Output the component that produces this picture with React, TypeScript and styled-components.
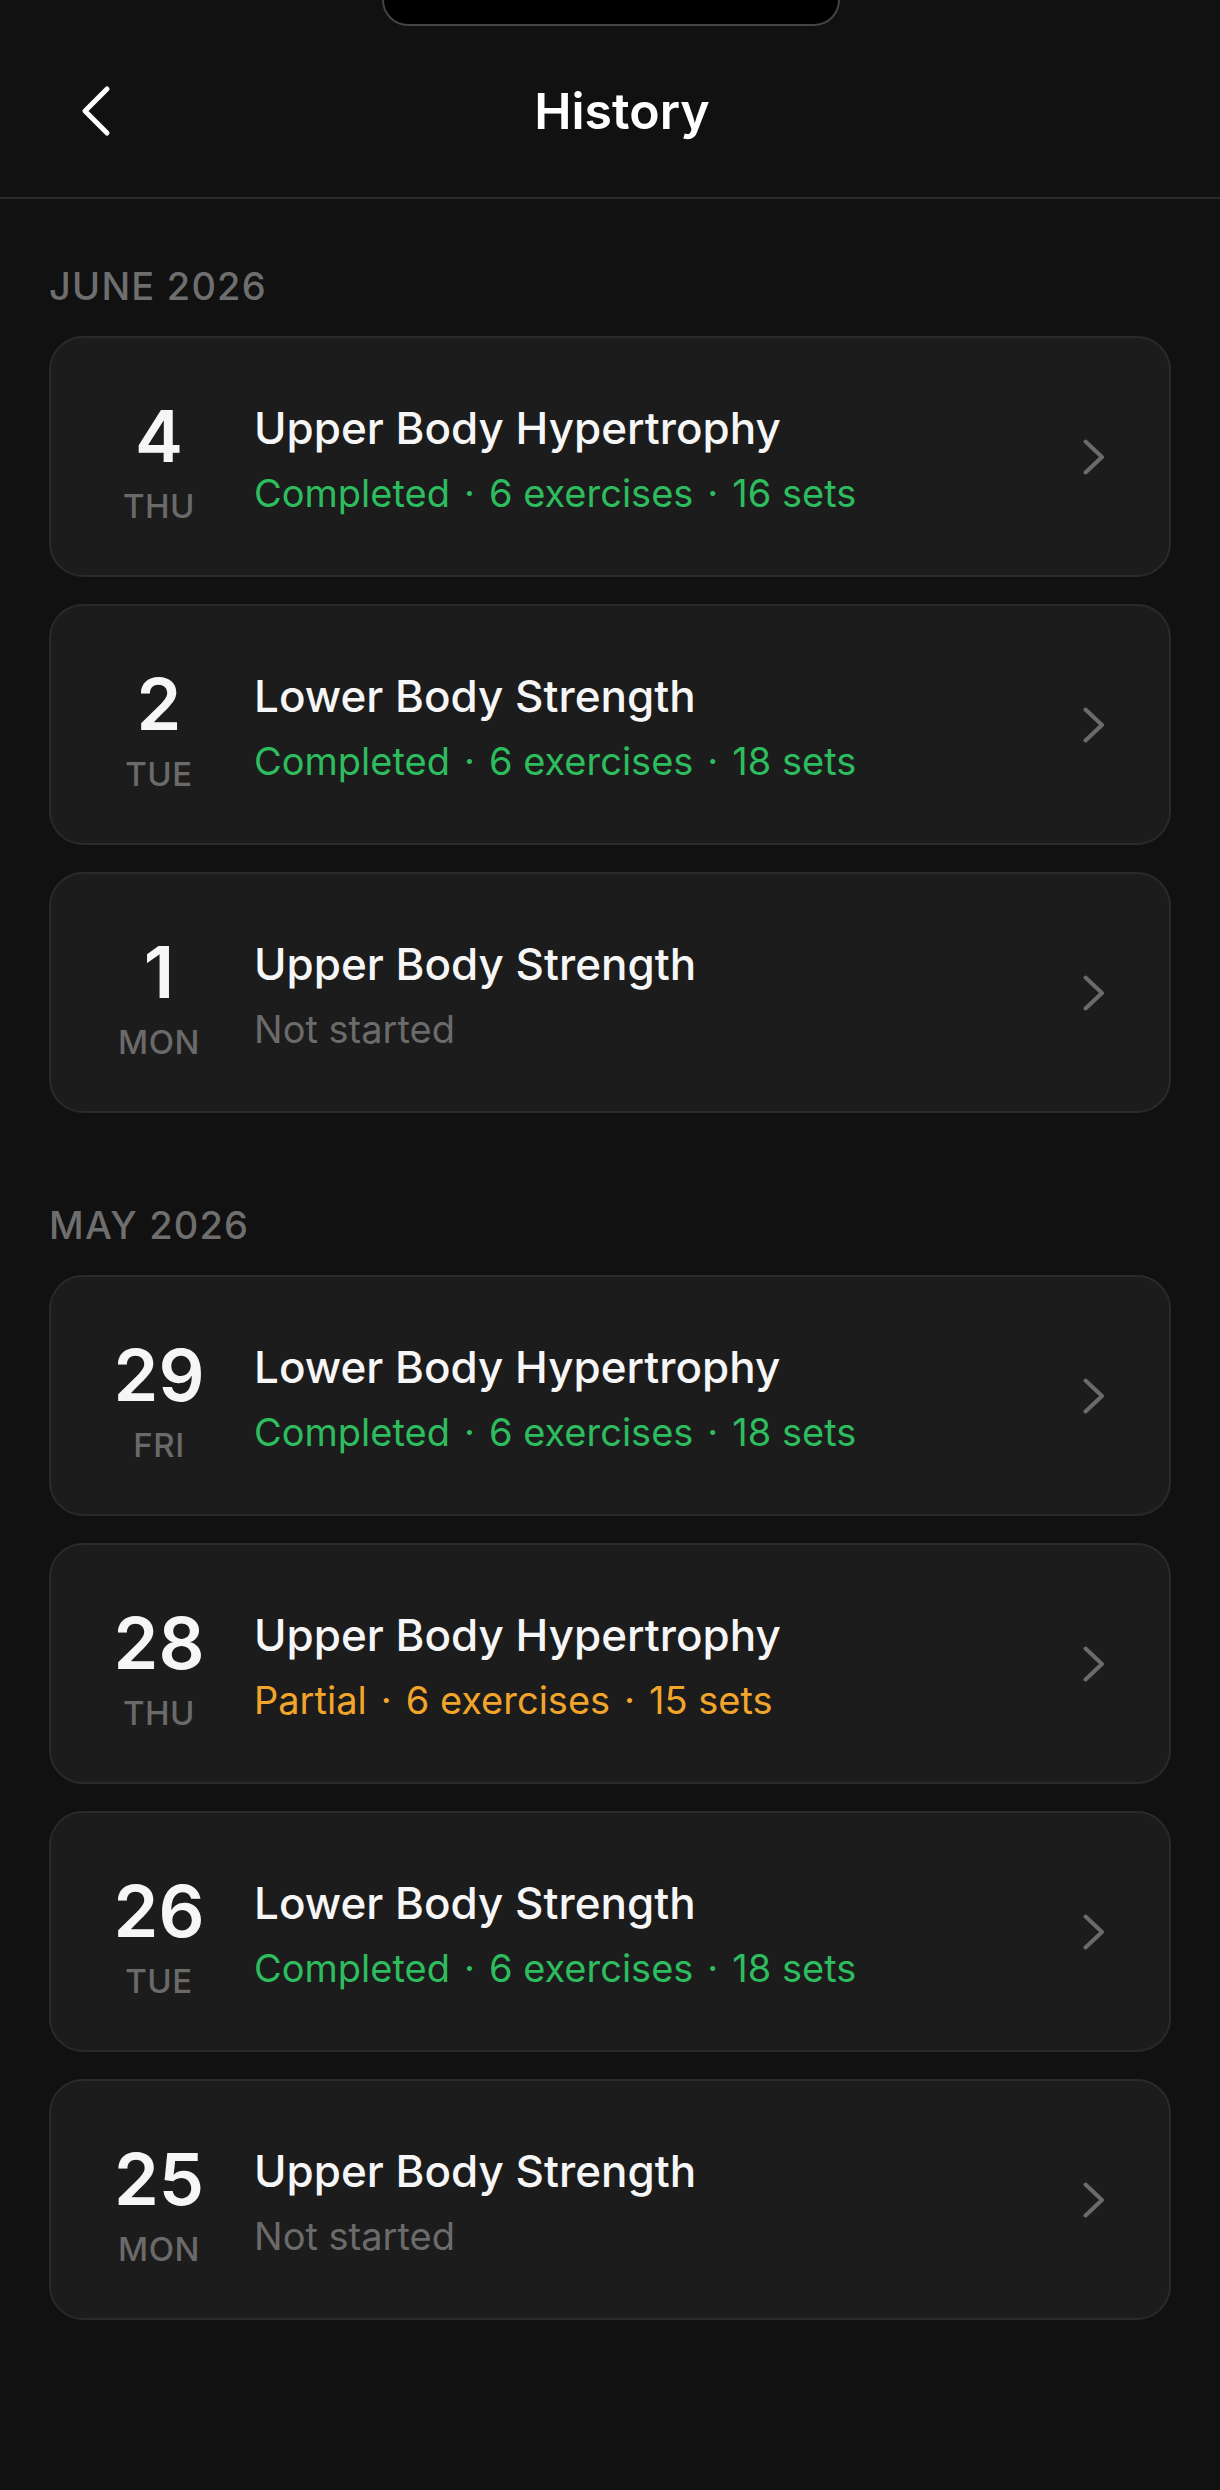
import React, { FunctionComponent } from "react";
import styled, { createGlobalStyle } from "styled-components";

const GlobalStyle = createGlobalStyle`
  html, body {
    margin: 0;
    padding: 0;
    background: #111111;
  }
  body {
    font-family: Inter, "Noto Sans", "Liberation Sans", sans-serif;
    -webkit-font-smoothing: antialiased;
  }
`;

type Status = "completed" | "partial" | "none";

type Workout = {
  day: number;
  weekday: string;
  title: string;
  status: Status;
  exercises?: number;
  sets?: number;
};

type Month = {
  label: string;
  workouts: Workout[];
};

const months: Month[] = [
  {
    label: "June 2026",
    workouts: [
      { day: 4, weekday: "Thu", title: "Upper Body Hypertrophy", status: "completed", exercises: 6, sets: 16 },
      { day: 2, weekday: "Tue", title: "Lower Body Strength", status: "completed", exercises: 6, sets: 18 },
      { day: 1, weekday: "Mon", title: "Upper Body Strength", status: "none" },
    ],
  },
  {
    label: "May 2026",
    workouts: [
      { day: 29, weekday: "Fri", title: "Lower Body Hypertrophy", status: "completed", exercises: 6, sets: 18 },
      { day: 28, weekday: "Thu", title: "Upper Body Hypertrophy", status: "partial", exercises: 6, sets: 15 },
      { day: 26, weekday: "Tue", title: "Lower Body Strength", status: "completed", exercises: 6, sets: 18 },
      { day: 25, weekday: "Mon", title: "Upper Body Strength", status: "none" },
    ],
  },
];

const statusColor: Record<Status, string> = {
  completed: "#2dbd5e",
  partial: "#f2a52b",
  none: "#6b6b6b",
};

const statusLabel: Record<Status, string> = {
  completed: "Completed",
  partial: "Partial",
  none: "Not started",
};

const Screen = styled.div`
  position: relative;
  min-height: 2490px;
  background: #111111;
  color: #f4f4f4;
`;

const Notch = styled.div`
  position: absolute;
  top: 0;
  left: 382px;
  width: 454px;
  height: 24px;
  background: #000;
  border: 2px solid #444444;
  border-top: none;
  border-radius: 0 0 38px 38px;
`;

const Header = styled.header`
  display: grid;
  grid-template-columns: 1fr auto 1fr;
  align-items: center;
  height: 173px;
  padding-top: 24px;
  border-bottom: 2px solid #2a2a2a;
`;

const BackButton = styled.button`
  justify-self: start;
  display: flex;
  align-items: center;
  margin-left: 80px;
  padding: 0;
  border: none;
  background: none;
  color: #ffffff;
  cursor: pointer;
`;

const Title = styled.h1`
  margin: 0;
  padding-left: 24px;
  font-size: 50px;
  font-weight: 600;
  line-height: 60px;
  color: #ffffff;
`;

const Content = styled.main`
  display: flex;
  flex-direction: column;
  gap: 89px;
  padding: 64px 49px 0;
`;

const Section = styled.section`
  display: flex;
  flex-direction: column;
`;

const SectionLabel = styled.h2`
  margin: 0 0 27px 0;
  font-size: 38px;
  font-weight: 500;
  line-height: 46px;
  letter-spacing: 1.2px;
  text-transform: uppercase;
  color: #6e6e6e;
`;

const List = styled.div`
  display: flex;
  flex-direction: column;
  gap: 27px;
`;

const Card = styled.div`
  display: flex;
  align-items: center;
  box-sizing: border-box;
  height: 241px;
  padding: 0 63px 0 48px;
  background: #1c1c1c;
  border: 2px solid #2a2a2a;
  border-radius: 34px;
`;

const DateColumn = styled.div`
  display: flex;
  flex-direction: column;
  align-items: center;
  width: 120px;
  padding-top: 12px;
  flex-shrink: 0;
`;

const DayNumber = styled.div`
  font-size: 72px;
  font-weight: 600;
  line-height: 72px;
  color: #f6f6f6;
`;

const Weekday = styled.div`
  margin-top: 14px;
  font-size: 33px;
  font-weight: 500;
  line-height: 40px;
  letter-spacing: 0.5px;
  text-transform: uppercase;
  color: #6a6a6a;
`;

const Info = styled.div`
  display: flex;
  flex-direction: column;
  flex: 1;
  margin-left: 35px;
  padding-top: 5px;
`;

const WorkoutTitle = styled.div`
  font-size: 44px;
  font-weight: 500;
  line-height: 54px;
  color: #f6f6f6;
`;

const Meta = styled.div<{ $status: Status }>`
  margin-top: 14px;
  font-size: 38px;
  font-weight: 400;
  line-height: 48px;
  color: ${(p) => statusColor[p.$status]};
`;

const Dot = styled.span`
  margin: 0 14px;
`;

const Chevron = styled.svg`
  flex-shrink: 0;
  color: #6b6b6b;
`;

const WorkoutCard: FunctionComponent<{ workout: Workout }> = ({ workout }) => {
  const { day, weekday, title, status, exercises, sets } = workout;
  return (
    <Card>
      <DateColumn>
        <DayNumber>{day}</DayNumber>
        <Weekday>{weekday}</Weekday>
      </DateColumn>
      <Info>
        <WorkoutTitle>{title}</WorkoutTitle>
        <Meta $status={status}>
          {statusLabel[status]}
          {status !== "none" && (
            <>
              <Dot>·</Dot>
              {exercises} exercises
              <Dot>·</Dot>
              {sets} sets
            </>
          )}
        </Meta>
      </Info>
      <Chevron width="24" height="36" viewBox="0 0 24 36" fill="none">
        <path
          d="M3.5 2.5 L20 18 L3.5 33.5"
          stroke="currentColor"
          strokeWidth="4"
          strokeLinecap="round"
          strokeLinejoin="round"
        />
      </Chevron>
    </Card>
  );
};

const App: FunctionComponent = () => (
  <Screen>
    <GlobalStyle />
    <Notch />
    <Header>
      <BackButton aria-label="Back">
        <svg width="32" height="52" viewBox="0 0 32 52" fill="none">
          <path
            d="M27 4 L5 26 L27 48"
            stroke="currentColor"
            strokeWidth="5"
            strokeLinecap="round"
            strokeLinejoin="round"
          />
        </svg>
      </BackButton>
      <Title>History</Title>
      <div />
    </Header>
    <Content>
      {months.map((month) => (
        <Section key={month.label}>
          <SectionLabel>{month.label}</SectionLabel>
          <List>
            {month.workouts.map((w) => (
              <WorkoutCard key={`${month.label}-${w.day}`} workout={w} />
            ))}
          </List>
        </Section>
      ))}
    </Content>
  </Screen>
);

export default App;
